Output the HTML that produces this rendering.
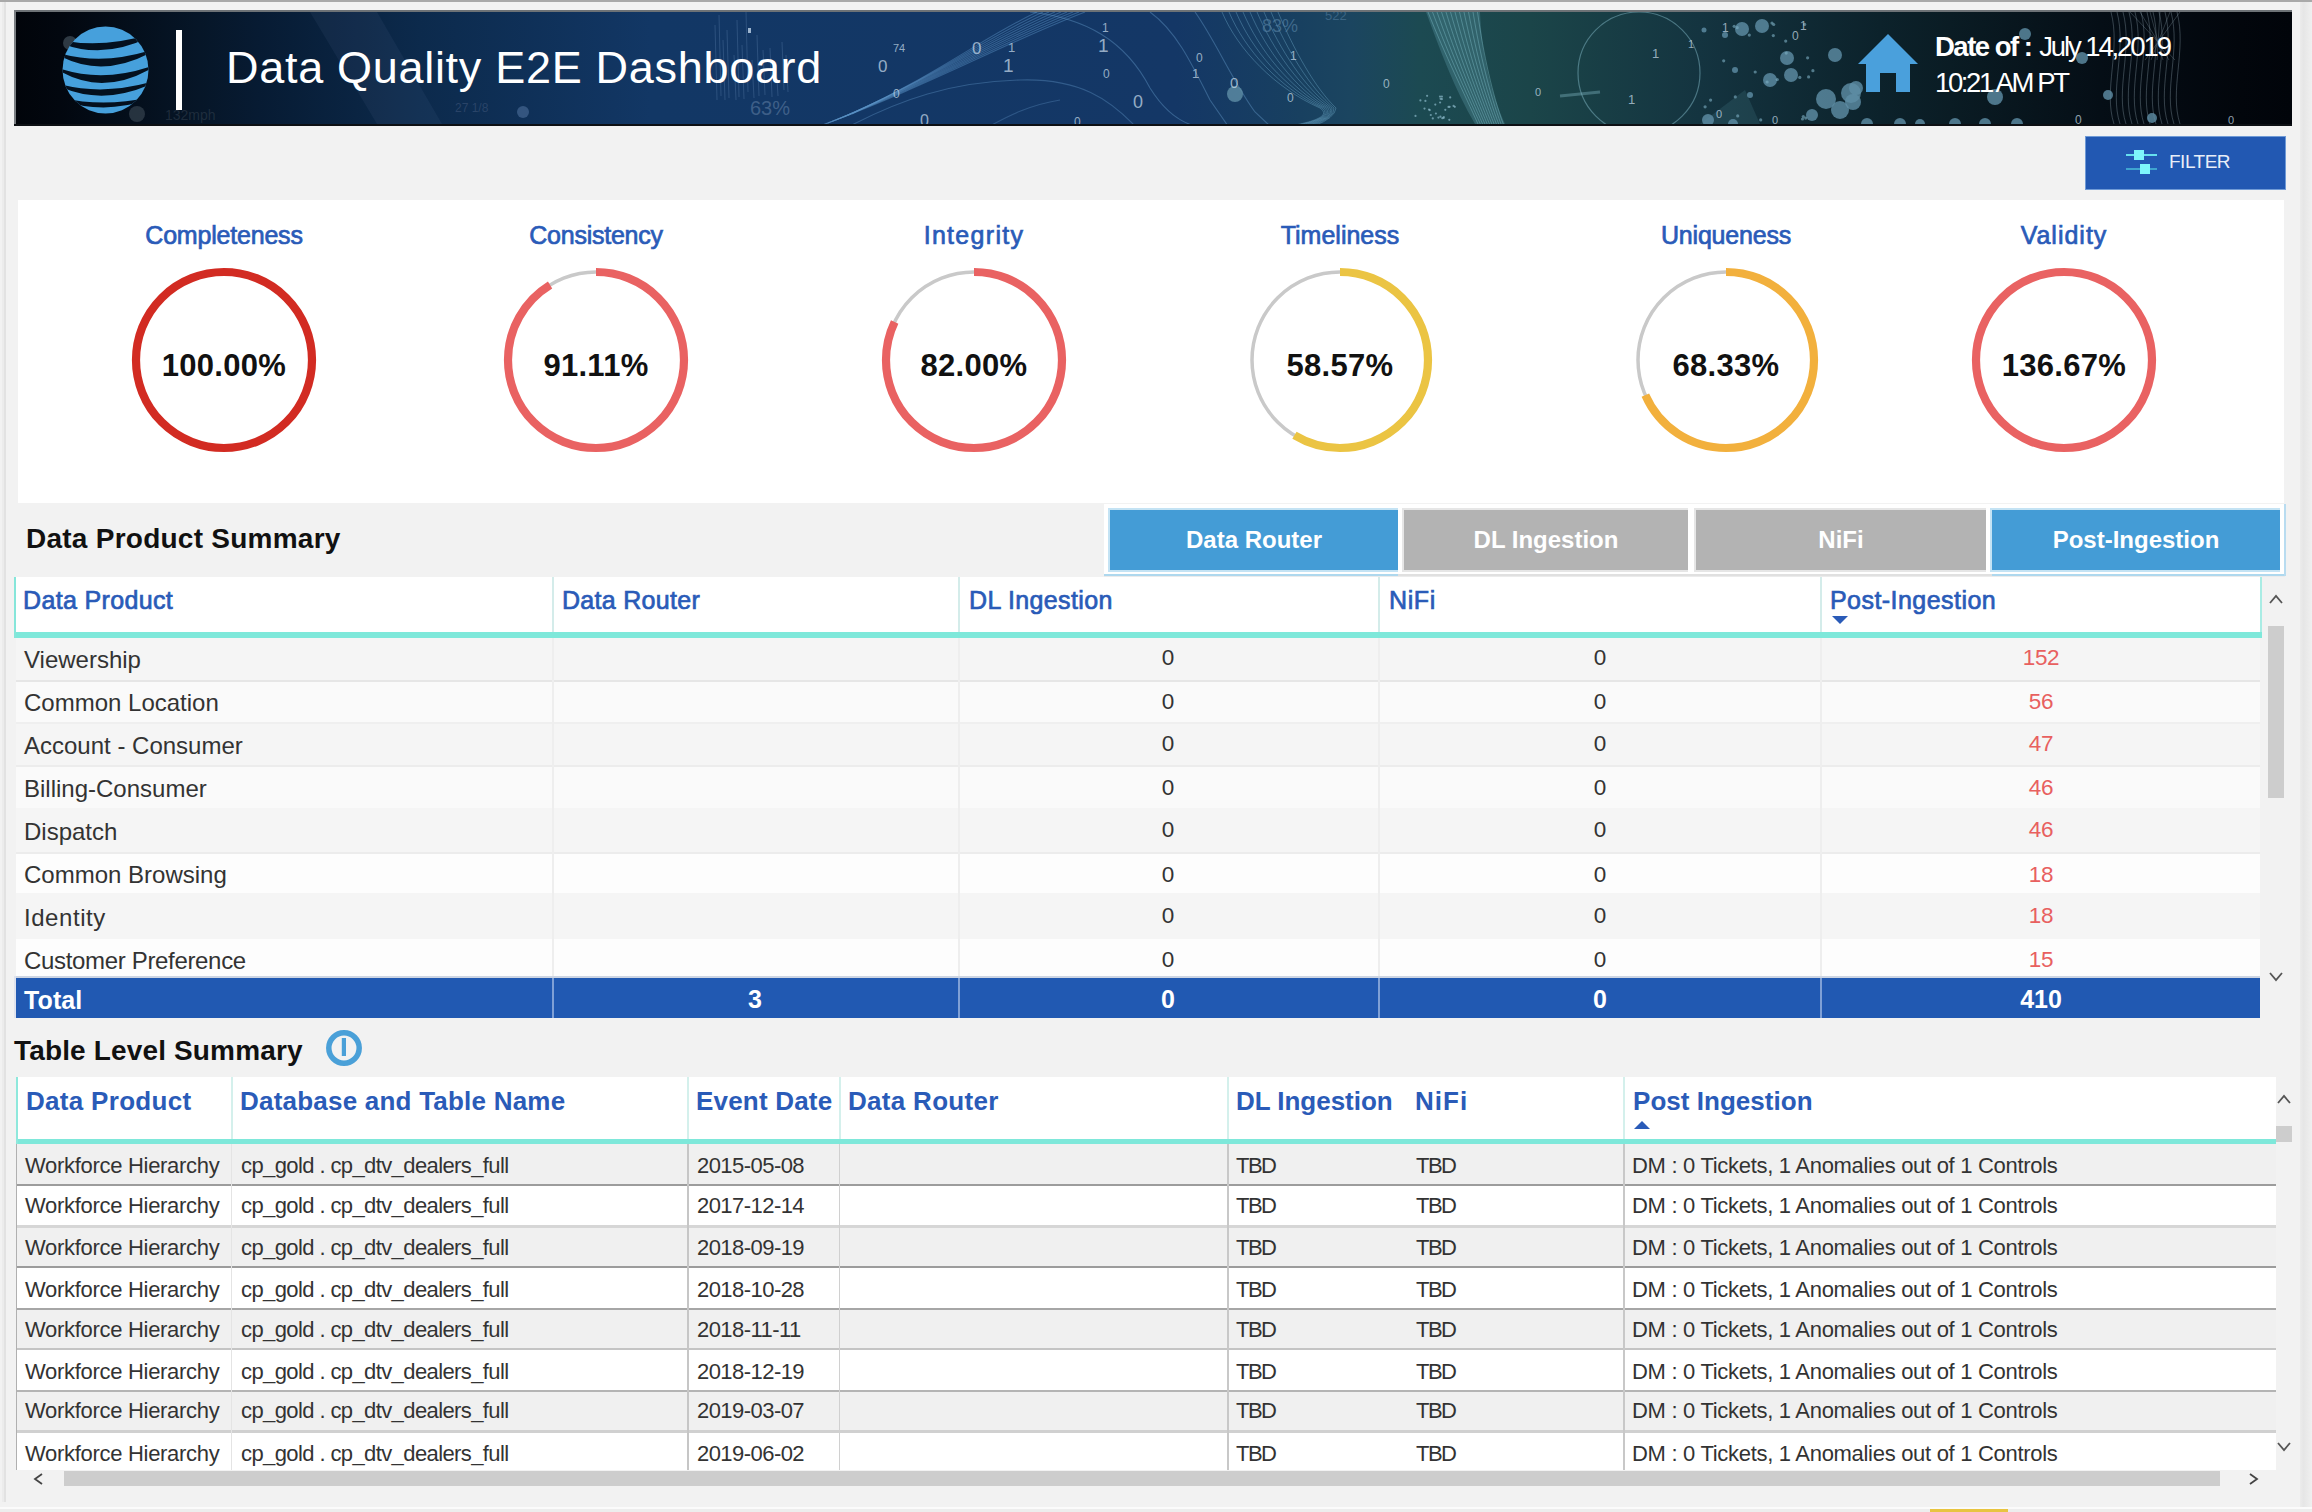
<!DOCTYPE html>
<html><head><meta charset="utf-8"><title>Data Quality E2E Dashboard</title>
<style>
html,body{margin:0;padding:0;}
body{width:2312px;height:1512px;overflow:hidden;background:#f2f2f2;position:relative;font-family:"Liberation Sans",sans-serif;}
.r{position:absolute;}
.t{position:absolute;white-space:nowrap;}
</style></head><body>
<div class="r" style="left:0px;top:0px;width:2312px;height:2px;background:#a9a9a9;"></div>
<div class="r" style="left:2px;top:2px;width:2px;height:1500px;background:#ececec;"></div>
<div class="r" style="left:4px;top:2px;width:2px;height:1500px;background:#e2e2e2;"></div>
<div class="r" style="left:2300px;top:2px;width:12px;height:1506px;background:linear-gradient(90deg,#ececec,#e6e6e6 30%,#f0f0f0);"></div>
<div class="r" style="left:0px;top:1507px;width:2312px;height:2px;background:#fbfbfb;"></div>
<div class="r" style="left:0px;top:1509px;width:2312px;height:3px;background:#ededed;"></div>
<div class="r" style="left:1930px;top:1509px;width:78px;height:3px;background:#e8c440;"></div>
<div class="r" style="left:14px;top:10px;width:2278px;height:116px;background:linear-gradient(90deg,#01040a 0.00%,#02070f 2.02%,#061628 8.17%,#071b33 10.80%,#0c2a4c 17.82%,#123765 27.92%,#143766 50.97%,#184060 56.45%,#1b4560 58.65%,#1c4a52 61.72%,#1b4549 66.55%,#143440 74.01%,#0c222b 81.91%,#0a1c24 84.99%,#050e16 91.57%,#02060c 97.72%,#01040a 100.00%);"></div>
<div class="r" style="left:14px;top:10px;width:2278px;height:2px;background:#6d7276;"></div>
<div class="r" style="left:14px;top:10px;width:2px;height:116px;background:#7a7e82;"></div>
<div class="r" style="left:14px;top:124px;width:2278px;height:2px;background:#0d1014;"></div>
<svg class="r" style="left:0;top:0" width="2312" height="140"><defs><clipPath id="bc"><rect x="16" y="12" width="2276" height="112"/></clipPath></defs><g clip-path="url(#bc)"><path d="M310,12 L377,12 L442,124 L377,124 Z" fill="#6a8ab0" fill-opacity="0.09"/><path d="M715,25 L717,100" stroke="#6f95c0" stroke-opacity="0.28" stroke-width="1" fill="none"/><path d="M719,15 L721,96" stroke="#6f95c0" stroke-opacity="0.28" stroke-width="1" fill="none"/><path d="M723,40 L725,100" stroke="#6f95c0" stroke-opacity="0.28" stroke-width="1" fill="none"/><path d="M727,30 L729,98" stroke="#6f95c0" stroke-opacity="0.28" stroke-width="1" fill="none"/><path d="M734,55 L736,100" stroke="#6f95c0" stroke-opacity="0.28" stroke-width="1" fill="none"/><path d="M737,20 L739,97" stroke="#6f95c0" stroke-opacity="0.28" stroke-width="1" fill="none"/><path d="M742,45 L744,99" stroke="#6f95c0" stroke-opacity="0.28" stroke-width="1" fill="none"/><path d="M746,12 L748,92" stroke="#6f95c0" stroke-opacity="0.28" stroke-width="1" fill="none"/><path d="M752,60 L754,98" stroke="#6f95c0" stroke-opacity="0.28" stroke-width="1" fill="none"/><path d="M757,35 L759,96" stroke="#6f95c0" stroke-opacity="0.28" stroke-width="1" fill="none"/><path d="M763,50 L765,95" stroke="#6f95c0" stroke-opacity="0.28" stroke-width="1" fill="none"/><path d="M770,48 L772,97" stroke="#6f95c0" stroke-opacity="0.28" stroke-width="1" fill="none"/><path d="M776,62 L778,96" stroke="#6f95c0" stroke-opacity="0.28" stroke-width="1" fill="none"/><path d="M782,42 L784,90" stroke="#6f95c0" stroke-opacity="0.28" stroke-width="1" fill="none"/><path d="M786,55 L788,92" stroke="#6f95c0" stroke-opacity="0.28" stroke-width="1" fill="none"/><rect x="748" y="28" width="3" height="5" fill="#c0d4ea" fill-opacity="0.8"/><path d="M820,126.0 C930,85 1000,45 1085,12" stroke="#5b93c6" stroke-opacity="0.45" stroke-width="1.1" fill="none"/><path d="M824,124.5 C932,83 998,44 1079,12" stroke="#5b93c6" stroke-opacity="0.45" stroke-width="1.1" fill="none"/><path d="M828,123.0 C934,81 996,43 1073,12" stroke="#5b93c6" stroke-opacity="0.45" stroke-width="1.1" fill="none"/><path d="M832,121.5 C936,79 994,42 1067,12" stroke="#5b93c6" stroke-opacity="0.45" stroke-width="1.1" fill="none"/><path d="M836,120.0 C938,77 992,41 1061,12" stroke="#5b93c6" stroke-opacity="0.45" stroke-width="1.1" fill="none"/><path d="M840,118.5 C940,75 990,40 1055,12" stroke="#5b93c6" stroke-opacity="0.45" stroke-width="1.1" fill="none"/><path d="M844,117.0 C942,73 988,39 1049,12" stroke="#5b93c6" stroke-opacity="0.45" stroke-width="1.1" fill="none"/><path d="M848,115.5 C944,71 986,38 1043,12" stroke="#5b93c6" stroke-opacity="0.45" stroke-width="1.1" fill="none"/><path d="M852,114.0 C946,69 984,37 1037,12" stroke="#5b93c6" stroke-opacity="0.45" stroke-width="1.1" fill="none"/><path d="M1030,12 C1085,18 1125,40 1150,88 C1165,112 1180,122 1195,126" stroke="#6aa0d0" stroke-opacity="0.4" stroke-width="1.1" fill="none"/><path d="M850,126 C900,100 950,82 1020,80 C1080,78 1110,100 1135,126" stroke="#6aa0d0" stroke-opacity="0.35" stroke-width="1.1" fill="none"/><path d="M990,126 C1010,115 1030,105 1060,100" stroke="#6aa0d0" stroke-opacity="0.3" stroke-width="1.1" fill="none"/><path d="M1150,12 C1175,30 1190,60 1210,100 L1228,126" stroke="#6aa0d0" stroke-opacity="0.4" stroke-width="1.1" fill="none"/><path d="M1195,12 C1215,40 1232,80 1255,112 L1270,126" stroke="#6aa0d0" stroke-opacity="0.4" stroke-width="1.1" fill="none"/><path d="M1222,12 C1238,50 1275,88 1320,108 Q1335,118 1290,126" stroke="#74b0d0" stroke-opacity="0.38" stroke-width="1" fill="none"/><path d="M1229,12 C1245,50 1280,88 1322,108 Q1335,118 1293,126" stroke="#74b0d0" stroke-opacity="0.38" stroke-width="1" fill="none"/><path d="M1236,12 C1252,50 1285,88 1324,108 Q1335,118 1296,126" stroke="#74b0d0" stroke-opacity="0.38" stroke-width="1" fill="none"/><path d="M1243,12 C1259,50 1290,88 1326,108 Q1335,118 1299,126" stroke="#74b0d0" stroke-opacity="0.38" stroke-width="1" fill="none"/><path d="M1250,12 C1266,50 1295,88 1328,108 Q1335,118 1302,126" stroke="#74b0d0" stroke-opacity="0.38" stroke-width="1" fill="none"/><path d="M1257,12 C1273,50 1300,88 1330,108 Q1335,118 1305,126" stroke="#74b0d0" stroke-opacity="0.38" stroke-width="1" fill="none"/><path d="M1264,12 C1280,50 1305,88 1332,108 Q1335,118 1308,126" stroke="#74b0d0" stroke-opacity="0.38" stroke-width="1" fill="none"/><path d="M1271,12 C1287,50 1310,88 1334,108 Q1335,118 1311,126" stroke="#74b0d0" stroke-opacity="0.38" stroke-width="1" fill="none"/><path d="M1278,12 C1294,50 1315,88 1336,108 Q1335,118 1314,126" stroke="#74b0d0" stroke-opacity="0.38" stroke-width="1" fill="none"/><path d="M1426,12 L1480,12 C1482,60 1492,95 1505,124 L1475,124 C1455,90 1440,50 1426,12 Z" fill="#7fc4d4" fill-opacity="0.22"/><path d="M1428.0,12 C1445.0,55 1465.0,95 1478.0,124" stroke="#8fd0dc" stroke-opacity="0.35" stroke-width="1" fill="none"/><path d="M1432.5,12 C1448.5,55 1467.5,95 1480.3,124" stroke="#8fd0dc" stroke-opacity="0.35" stroke-width="1" fill="none"/><path d="M1437.0,12 C1452.0,55 1470.0,95 1482.6,124" stroke="#8fd0dc" stroke-opacity="0.35" stroke-width="1" fill="none"/><path d="M1441.5,12 C1455.5,55 1472.5,95 1484.9,124" stroke="#8fd0dc" stroke-opacity="0.35" stroke-width="1" fill="none"/><path d="M1446.0,12 C1459.0,55 1475.0,95 1487.2,124" stroke="#8fd0dc" stroke-opacity="0.35" stroke-width="1" fill="none"/><path d="M1450.5,12 C1462.5,55 1477.5,95 1489.5,124" stroke="#8fd0dc" stroke-opacity="0.35" stroke-width="1" fill="none"/><path d="M1455.0,12 C1466.0,55 1480.0,95 1491.8,124" stroke="#8fd0dc" stroke-opacity="0.35" stroke-width="1" fill="none"/><path d="M1459.5,12 C1469.5,55 1482.5,95 1494.1,124" stroke="#8fd0dc" stroke-opacity="0.35" stroke-width="1" fill="none"/><path d="M1464.0,12 C1473.0,55 1485.0,95 1496.4,124" stroke="#8fd0dc" stroke-opacity="0.35" stroke-width="1" fill="none"/><path d="M1468.5,12 C1476.5,55 1487.5,95 1498.7,124" stroke="#8fd0dc" stroke-opacity="0.35" stroke-width="1" fill="none"/><path d="M1473.0,12 C1480.0,55 1490.0,95 1501.0,124" stroke="#8fd0dc" stroke-opacity="0.35" stroke-width="1" fill="none"/><path d="M1477.5,12 C1483.5,55 1492.5,95 1503.3,124" stroke="#8fd0dc" stroke-opacity="0.35" stroke-width="1" fill="none"/><path d="M1700,124 L1745,90 L1760,124 Z" fill="#7fc4d4" fill-opacity="0.12"/><path d="M2111,12 C2121,50 2103,90 2114,124" stroke="#a8c0cc" stroke-opacity="0.3" stroke-width="1" fill="none"/><path d="M2117,12 C2127,50 2109,90 2120,124" stroke="#a8c0cc" stroke-opacity="0.3" stroke-width="1" fill="none"/><path d="M2123,12 C2133,50 2115,90 2126,124" stroke="#a8c0cc" stroke-opacity="0.3" stroke-width="1" fill="none"/><path d="M2129,12 C2139,50 2121,90 2132,124" stroke="#a8c0cc" stroke-opacity="0.3" stroke-width="1" fill="none"/><path d="M2135,12 C2145,50 2127,90 2138,124" stroke="#a8c0cc" stroke-opacity="0.3" stroke-width="1" fill="none"/><path d="M2141,12 C2151,50 2133,90 2144,124" stroke="#a8c0cc" stroke-opacity="0.3" stroke-width="1" fill="none"/><path d="M2147,12 C2157,50 2139,90 2150,124" stroke="#a8c0cc" stroke-opacity="0.3" stroke-width="1" fill="none"/><path d="M2153,12 C2163,50 2145,90 2156,124" stroke="#a8c0cc" stroke-opacity="0.3" stroke-width="1" fill="none"/><path d="M2159,12 C2169,50 2151,90 2162,124" stroke="#a8c0cc" stroke-opacity="0.3" stroke-width="1" fill="none"/><path d="M2165,12 C2175,50 2157,90 2168,124" stroke="#a8c0cc" stroke-opacity="0.3" stroke-width="1" fill="none"/><path d="M2171,12 C2181,50 2163,90 2174,124" stroke="#a8c0cc" stroke-opacity="0.3" stroke-width="1" fill="none"/><path d="M2177,12 C2187,50 2169,90 2180,124" stroke="#a8c0cc" stroke-opacity="0.3" stroke-width="1" fill="none"/><path d="M2130,12 L2175,60" stroke="#a8c0cc" stroke-opacity="0.25" stroke-width="1" fill="none"/><path d="M2140,12 L2169,60" stroke="#a8c0cc" stroke-opacity="0.25" stroke-width="1" fill="none"/><path d="M2150,12 L2163,60" stroke="#a8c0cc" stroke-opacity="0.25" stroke-width="1" fill="none"/><path d="M2160,12 L2157,60" stroke="#a8c0cc" stroke-opacity="0.25" stroke-width="1" fill="none"/><path d="M2170,12 L2151,60" stroke="#a8c0cc" stroke-opacity="0.25" stroke-width="1" fill="none"/><path d="M2180,12 L2145,60" stroke="#a8c0cc" stroke-opacity="0.25" stroke-width="1" fill="none"/><circle cx="1639" cy="73" r="61" stroke="#7fb6c4" stroke-opacity="0.5" stroke-width="1.2" fill="none"/><path d="M1560,96 L1600,92" stroke="#7fb6c4" stroke-opacity="0.4" stroke-width="3" fill="none"/><circle cx="1742" cy="29" r="7" fill="#5f8ea6" fill-opacity="0.8"/><circle cx="1762" cy="26" r="7" fill="#5f8ea6" fill-opacity="0.8"/><circle cx="1787" cy="58" r="7" fill="#5f8ea6" fill-opacity="0.8"/><circle cx="1835" cy="55" r="7" fill="#5f8ea6" fill-opacity="0.8"/><circle cx="1770" cy="80" r="7" fill="#5f8ea6" fill-opacity="0.8"/><circle cx="1791" cy="75" r="7" fill="#5f8ea6" fill-opacity="0.8"/><circle cx="1826" cy="99" r="10" fill="#5f8ea6" fill-opacity="0.8"/><circle cx="1851" cy="93" r="10" fill="#5f8ea6" fill-opacity="0.8"/><circle cx="1840" cy="110" r="9" fill="#5f8ea6" fill-opacity="0.8"/><circle cx="1812" cy="115" r="6" fill="#5f8ea6" fill-opacity="0.8"/><circle cx="1735" cy="70" r="3" fill="#5f8ea6" fill-opacity="0.8"/><circle cx="1750" cy="95" r="3" fill="#5f8ea6" fill-opacity="0.8"/><circle cx="1725" cy="35" r="3" fill="#5f8ea6" fill-opacity="0.8"/><circle cx="1704" cy="30" r="2.5" fill="#5f8ea6" fill-opacity="0.8"/><circle cx="1708" cy="120" r="6" fill="#5f8ea6" fill-opacity="0.8"/><circle cx="1733" cy="124" r="5" fill="#5f8ea6" fill-opacity="0.8"/><circle cx="1235" cy="94" r="8" fill="#5f8ea6" fill-opacity="0.8"/><circle cx="1867" cy="124" r="6" fill="#5f8ea6" fill-opacity="0.8"/><circle cx="1900" cy="124" r="6" fill="#5f8ea6" fill-opacity="0.8"/><circle cx="1920" cy="124" r="5" fill="#5f8ea6" fill-opacity="0.8"/><circle cx="1955" cy="124" r="6" fill="#5f8ea6" fill-opacity="0.8"/><circle cx="1985" cy="124" r="6" fill="#5f8ea6" fill-opacity="0.8"/><circle cx="2017" cy="124" r="6" fill="#5f8ea6" fill-opacity="0.8"/><circle cx="1995" cy="97" r="8" fill="#5f8ea6" fill-opacity="0.8"/><circle cx="2108" cy="95" r="5" fill="#5f8ea6" fill-opacity="0.8"/><circle cx="2152" cy="118" r="5" fill="#5f8ea6" fill-opacity="0.8"/><circle cx="2025" cy="34" r="6" fill="#5f8ea6" fill-opacity="0.8"/><circle cx="2082" cy="58" r="6" fill="#5f8ea6" fill-opacity="0.8"/><circle cx="1856" cy="88" r="7" fill="#5f8ea6" fill-opacity="0.8"/><circle cx="1853" cy="102" r="8" fill="#5f8ea6" fill-opacity="0.8"/><circle cx="1424.5" cy="108.6" r="1.1" fill="#8ab8c8" fill-opacity="0.7"/><circle cx="1429.8" cy="110.1" r="1.1" fill="#8ab8c8" fill-opacity="0.7"/><circle cx="1440.0" cy="96.6" r="1.1" fill="#8ab8c8" fill-opacity="0.7"/><circle cx="1415.5" cy="115.9" r="1.1" fill="#8ab8c8" fill-opacity="0.7"/><circle cx="1425.4" cy="100.9" r="1.1" fill="#8ab8c8" fill-opacity="0.7"/><circle cx="1454.8" cy="106.8" r="1.1" fill="#8ab8c8" fill-opacity="0.7"/><circle cx="1448.5" cy="106.9" r="1.1" fill="#8ab8c8" fill-opacity="0.7"/><circle cx="1440.6" cy="98.8" r="1.1" fill="#8ab8c8" fill-opacity="0.7"/><circle cx="1440.4" cy="116.7" r="1.1" fill="#8ab8c8" fill-opacity="0.7"/><circle cx="1435.9" cy="113.5" r="1.1" fill="#8ab8c8" fill-opacity="0.7"/><circle cx="1441.9" cy="96.6" r="1.1" fill="#8ab8c8" fill-opacity="0.7"/><circle cx="1445.3" cy="109.8" r="1.1" fill="#8ab8c8" fill-opacity="0.7"/><circle cx="1427.1" cy="95.8" r="1.1" fill="#8ab8c8" fill-opacity="0.7"/><circle cx="1449.6" cy="106.8" r="1.1" fill="#8ab8c8" fill-opacity="0.7"/><circle cx="1443.8" cy="117.0" r="1.1" fill="#8ab8c8" fill-opacity="0.7"/><circle cx="1443.6" cy="118.0" r="1.1" fill="#8ab8c8" fill-opacity="0.7"/><circle cx="1430.8" cy="115.0" r="1.1" fill="#8ab8c8" fill-opacity="0.7"/><circle cx="1432.8" cy="118.4" r="1.1" fill="#8ab8c8" fill-opacity="0.7"/><circle cx="1450.2" cy="97.4" r="1.1" fill="#8ab8c8" fill-opacity="0.7"/><circle cx="1420.4" cy="100.4" r="1.1" fill="#8ab8c8" fill-opacity="0.7"/><circle cx="1453.6" cy="105.9" r="1.1" fill="#8ab8c8" fill-opacity="0.7"/><circle cx="1440.1" cy="102.5" r="1.1" fill="#8ab8c8" fill-opacity="0.7"/><circle cx="1435.3" cy="104.6" r="1.1" fill="#8ab8c8" fill-opacity="0.7"/><circle cx="1429.0" cy="109.6" r="1.1" fill="#8ab8c8" fill-opacity="0.7"/><circle cx="1438.4" cy="117.6" r="1.1" fill="#8ab8c8" fill-opacity="0.7"/><circle cx="1442.3" cy="118.2" r="1.1" fill="#8ab8c8" fill-opacity="0.7"/><circle cx="1449.3" cy="119.8" r="1.1" fill="#8ab8c8" fill-opacity="0.7"/><circle cx="1441.9" cy="99.1" r="1.1" fill="#8ab8c8" fill-opacity="0.7"/><circle cx="1803.3" cy="116.5" r="1.6" fill="#7fb0c4" fill-opacity="0.6"/><circle cx="1808.6" cy="76.9" r="1.6" fill="#7fb0c4" fill-opacity="0.6"/><circle cx="1785.7" cy="41.1" r="1.6" fill="#7fb0c4" fill-opacity="0.6"/><circle cx="1799.8" cy="77.4" r="1.6" fill="#7fb0c4" fill-opacity="0.6"/><circle cx="1734.2" cy="26.3" r="1.6" fill="#7fb0c4" fill-opacity="0.6"/><circle cx="1802.5" cy="119.0" r="1.6" fill="#7fb0c4" fill-opacity="0.6"/><circle cx="1710.6" cy="100.1" r="1.6" fill="#7fb0c4" fill-opacity="0.6"/><circle cx="1749.3" cy="35.1" r="1.6" fill="#7fb0c4" fill-opacity="0.6"/><circle cx="1735.3" cy="96.9" r="1.6" fill="#7fb0c4" fill-opacity="0.6"/><circle cx="1804.7" cy="24.4" r="1.6" fill="#7fb0c4" fill-opacity="0.6"/><circle cx="1773.7" cy="24.5" r="1.6" fill="#7fb0c4" fill-opacity="0.6"/><circle cx="1786.2" cy="53.1" r="1.6" fill="#7fb0c4" fill-opacity="0.6"/><circle cx="1805.7" cy="118.1" r="1.6" fill="#7fb0c4" fill-opacity="0.6"/><circle cx="1760.7" cy="119.9" r="1.6" fill="#7fb0c4" fill-opacity="0.6"/><circle cx="1737.2" cy="27.7" r="1.6" fill="#7fb0c4" fill-opacity="0.6"/><circle cx="1772.0" cy="23.1" r="1.6" fill="#7fb0c4" fill-opacity="0.6"/><circle cx="1723.7" cy="60.8" r="1.6" fill="#7fb0c4" fill-opacity="0.6"/><circle cx="1773.3" cy="35.6" r="1.6" fill="#7fb0c4" fill-opacity="0.6"/><circle cx="1705.1" cy="106.8" r="1.6" fill="#7fb0c4" fill-opacity="0.6"/><circle cx="1737.7" cy="115.9" r="1.6" fill="#7fb0c4" fill-opacity="0.6"/><circle cx="1807.6" cy="57.8" r="1.6" fill="#7fb0c4" fill-opacity="0.6"/><circle cx="1755.2" cy="72.0" r="1.6" fill="#7fb0c4" fill-opacity="0.6"/><circle cx="1777.3" cy="79.6" r="1.6" fill="#7fb0c4" fill-opacity="0.6"/><circle cx="1767.1" cy="82.0" r="1.6" fill="#7fb0c4" fill-opacity="0.6"/><circle cx="1812.9" cy="70.7" r="1.6" fill="#7fb0c4" fill-opacity="0.6"/><circle cx="70" cy="43" r="7" fill="#3a4650" fill-opacity="0.8"/><circle cx="137" cy="114" r="8" fill="#2f3c48" fill-opacity="0.8"/><circle cx="523" cy="112" r="6" fill="#3d5f8a" fill-opacity="0.8"/><text x="878" y="72" font-size="17" fill="#cfe0f0" fill-opacity="0.7" font-family="Liberation Sans">0</text><text x="893" y="52" font-size="11" fill="#cfe0f0" fill-opacity="0.7" font-family="Liberation Sans">74</text><text x="972" y="54" font-size="17" fill="#cfe0f0" fill-opacity="0.7" font-family="Liberation Sans">0</text><text x="1008" y="52" font-size="13" fill="#cfe0f0" fill-opacity="0.7" font-family="Liberation Sans">1</text><text x="1003" y="72" font-size="19" fill="#cfe0f0" fill-opacity="0.7" font-family="Liberation Sans">1</text><text x="1102" y="32" font-size="12" fill="#cfe0f0" fill-opacity="0.7" font-family="Liberation Sans">1</text><text x="1098" y="52" font-size="19" fill="#cfe0f0" fill-opacity="0.7" font-family="Liberation Sans">1</text><text x="1103" y="78" font-size="12" fill="#cfe0f0" fill-opacity="0.7" font-family="Liberation Sans">0</text><text x="1133" y="108" font-size="18" fill="#cfe0f0" fill-opacity="0.7" font-family="Liberation Sans">0</text><text x="1196" y="62" font-size="12" fill="#cfe0f0" fill-opacity="0.7" font-family="Liberation Sans">0</text><text x="1192" y="78" font-size="13" fill="#cfe0f0" fill-opacity="0.7" font-family="Liberation Sans">1</text><text x="1230" y="88" font-size="15" fill="#cfe0f0" fill-opacity="0.7" font-family="Liberation Sans">0</text><text x="1287" y="102" font-size="12" fill="#cfe0f0" fill-opacity="0.7" font-family="Liberation Sans">0</text><text x="1290" y="60" font-size="12" fill="#cfe0f0" fill-opacity="0.7" font-family="Liberation Sans">1</text><text x="1383" y="88" font-size="12" fill="#cfe0f0" fill-opacity="0.7" font-family="Liberation Sans">0</text><text x="893" y="98" font-size="12" fill="#cfe0f0" fill-opacity="0.7" font-family="Liberation Sans">0</text><text x="920" y="126" font-size="16" fill="#cfe0f0" fill-opacity="0.7" font-family="Liberation Sans">0</text><text x="1074" y="126" font-size="12" fill="#cfe0f0" fill-opacity="0.7" font-family="Liberation Sans">0</text><text x="1535" y="96" font-size="11" fill="#cfe0f0" fill-opacity="0.7" font-family="Liberation Sans">0</text><text x="1652" y="58" font-size="13" fill="#cfe0f0" fill-opacity="0.7" font-family="Liberation Sans">1</text><text x="1628" y="104" font-size="13" fill="#cfe0f0" fill-opacity="0.7" font-family="Liberation Sans">1</text><text x="1688" y="48" font-size="11" fill="#cfe0f0" fill-opacity="0.7" font-family="Liberation Sans">1</text><text x="1716" y="118" font-size="11" fill="#cfe0f0" fill-opacity="0.7" font-family="Liberation Sans">0</text><text x="1722" y="32" font-size="12" fill="#cfe0f0" fill-opacity="0.7" font-family="Liberation Sans">1</text><text x="1800" y="30" font-size="12" fill="#cfe0f0" fill-opacity="0.7" font-family="Liberation Sans">1</text><text x="1792" y="40" font-size="12" fill="#cfe0f0" fill-opacity="0.7" font-family="Liberation Sans">0</text><text x="2075" y="124" font-size="12" fill="#cfe0f0" fill-opacity="0.7" font-family="Liberation Sans">0</text><text x="2228" y="124" font-size="11" fill="#cfe0f0" fill-opacity="0.7" font-family="Liberation Sans">0</text><text x="1772" y="124" font-size="11" fill="#cfe0f0" fill-opacity="0.7" font-family="Liberation Sans">0</text><text x="750" y="115" font-size="20" fill="#4a6a92" fill-opacity="0.8" font-family="Liberation Sans">63%</text><text x="1262" y="32" font-size="18" fill="#5a86a8" fill-opacity="0.6" font-family="Liberation Sans">83%</text><text x="1325" y="20" font-size="13" fill="#5a86a8" fill-opacity="0.5" font-family="Liberation Sans">522</text><text x="165" y="120" font-size="14" fill="#3d4a58" fill-opacity="0.45" font-family="Liberation Sans">132mph</text><text x="455" y="112" font-size="12" fill="#3d5478" fill-opacity="0.6" font-family="Liberation Sans">27   1/8</text></g></svg>
<svg class="r" style="left:0;top:0" width="220" height="140"><defs><clipPath id="gclip"><ellipse cx="105.5" cy="70" rx="43" ry="43.5"/></clipPath></defs><g clip-path="url(#gclip)"><rect x="55" y="20" width="100" height="100" fill="#46a0dc"/><path d="M56,39.2 Q102,49.5 154,33.2 L154,34.8 Q102,62.5 56,40.8 Z" fill="#04101e"/><path d="M56,52.2 Q102,66.5 154,49.2 L154,50.8 Q102,80.5 56,53.8 Z" fill="#04101e"/><path d="M56,67.2 Q102,84.0 154,65.2 L154,66.8 Q102,98.0 56,68.8 Z" fill="#04101e"/><path d="M56,83.2 Q102,96.5 154,81.2 L154,82.8 Q102,107.5 56,84.8 Z" fill="#04101e"/><path d="M56,96.2 Q102,109.0 154,96.2 L154,97.8 Q102,117.0 56,97.8 Z" fill="#04101e"/></g></svg>
<div class="r" style="left:176px;top:30px;width:6px;height:80px;background:#ffffff;"></div>
<div class="t " style="left:226px;top:45.41px;font-size:45px;line-height:45px;font-weight:400;color:#ffffff;letter-spacing:0.7px;">Data Quality E2E Dashboard</div>
<svg class="r" style="left:1850px;top:28px" width="80" height="70"><path d="M38,6 L68,36 L60,36 L60,64 L46,64 L46,45 L30,45 L30,64 L16,64 L16,36 L8,36 Z" fill="#4aa0dc"/></svg>
<div class="t " style="left:1935px;top:33.02px;font-size:27.5px;line-height:27.5px;font-weight:400;color:#ffffff;"><b style="letter-spacing:-1.5px">Date of :</b> <span style="letter-spacing:-2.1px">July 14,2019</span></div>
<div class="t " style="left:1935px;top:68.72px;font-size:27.5px;line-height:27.5px;font-weight:400;color:#ffffff;letter-spacing:-2.4px;">10:21 AM PT</div>
<div class="r" style="left:2085px;top:136px;width:201px;height:54px;background:#2258b2;box-shadow:inset 0 0 0 1px #6f9ad6;"></div>
<svg class="r" style="left:2120px;top:145px" width="45" height="35"><rect x="6" y="9" width="31" height="2" fill="#66e0ee"/><rect x="14" y="5" width="10" height="10" fill="#7ef6fb"/><rect x="6" y="23" width="31" height="2" fill="#3fa4d0"/><rect x="20" y="19" width="10" height="10" fill="#7ef6fb"/></svg>
<div class="t " style="left:2169px;top:151.92px;font-size:19px;line-height:19px;font-weight:400;color:#e8eef8;letter-spacing:-0.5px;">FILTER</div>
<div class="r" style="left:18px;top:200px;width:2266px;height:303px;background:#ffffff;"></div>
<svg class="r" style="left:0;top:0" width="2312" height="520"><circle cx="224" cy="360" r="88.0" fill="none" stroke="#c9c9c9" stroke-width="3.5"/><circle cx="224" cy="360" r="88.0" fill="none" stroke="#d22b22" stroke-width="8.2"/><circle cx="596" cy="360" r="88.0" fill="none" stroke="#c9c9c9" stroke-width="3.5"/><circle cx="596" cy="360" r="88.0" fill="none" stroke="#e96262" stroke-width="8.2" stroke-dasharray="503.77 552.92" transform="rotate(-90 596 360)"/><circle cx="974" cy="360" r="88.0" fill="none" stroke="#c9c9c9" stroke-width="3.5"/><circle cx="974" cy="360" r="88.0" fill="none" stroke="#e96262" stroke-width="8.2" stroke-dasharray="453.39 552.92" transform="rotate(-90 974 360)"/><circle cx="1340" cy="360" r="88.0" fill="none" stroke="#c9c9c9" stroke-width="3.5"/><circle cx="1340" cy="360" r="88.0" fill="none" stroke="#ebc443" stroke-width="8.2" stroke-dasharray="323.85 552.92" transform="rotate(-90 1340 360)"/><circle cx="1726" cy="360" r="88.0" fill="none" stroke="#c9c9c9" stroke-width="3.5"/><circle cx="1726" cy="360" r="88.0" fill="none" stroke="#f2b03d" stroke-width="8.2" stroke-dasharray="377.81 552.92" transform="rotate(-90 1726 360)"/><circle cx="2064" cy="360" r="88.0" fill="none" stroke="#c9c9c9" stroke-width="3.5"/><circle cx="2064" cy="360" r="88.0" fill="none" stroke="#e96262" stroke-width="8.2"/></svg>
<div class="t" style="left:24.0px;width:400px;text-align:center;top:223.14px;font-size:25px;line-height:25px;font-weight:400;color:#2a5bb8;letter-spacing:-0.2px;-webkit-text-stroke:0.7px #2a5bb8;">Completeness</div>
<div class="t" style="left:24.0px;width:400px;text-align:center;top:349.76px;font-size:31px;line-height:31px;font-weight:700;color:#111111;letter-spacing:0.3px;">100.00%</div>
<div class="t" style="left:396.0px;width:400px;text-align:center;top:223.14px;font-size:25px;line-height:25px;font-weight:400;color:#2a5bb8;letter-spacing:-0.25px;-webkit-text-stroke:0.7px #2a5bb8;">Consistency</div>
<div class="t" style="left:396.0px;width:400px;text-align:center;top:349.76px;font-size:31px;line-height:31px;font-weight:700;color:#111111;letter-spacing:0.3px;">91.11%</div>
<div class="t" style="left:774.0px;width:400px;text-align:center;top:223.14px;font-size:25px;line-height:25px;font-weight:400;color:#2a5bb8;letter-spacing:1.3px;-webkit-text-stroke:0.7px #2a5bb8;">Integrity</div>
<div class="t" style="left:774.0px;width:400px;text-align:center;top:349.76px;font-size:31px;line-height:31px;font-weight:700;color:#111111;letter-spacing:0.3px;">82.00%</div>
<div class="t" style="left:1140.0px;width:400px;text-align:center;top:223.14px;font-size:25px;line-height:25px;font-weight:400;color:#2a5bb8;letter-spacing:0.0px;-webkit-text-stroke:0.7px #2a5bb8;">Timeliness</div>
<div class="t" style="left:1140.0px;width:400px;text-align:center;top:349.76px;font-size:31px;line-height:31px;font-weight:700;color:#111111;letter-spacing:0.3px;">58.57%</div>
<div class="t" style="left:1526.0px;width:400px;text-align:center;top:223.14px;font-size:25px;line-height:25px;font-weight:400;color:#2a5bb8;letter-spacing:-0.2px;-webkit-text-stroke:0.7px #2a5bb8;">Uniqueness</div>
<div class="t" style="left:1526.0px;width:400px;text-align:center;top:349.76px;font-size:31px;line-height:31px;font-weight:700;color:#111111;letter-spacing:0.3px;">68.33%</div>
<div class="t" style="left:1864.0px;width:400px;text-align:center;top:223.14px;font-size:25px;line-height:25px;font-weight:400;color:#2a5bb8;letter-spacing:1.0px;-webkit-text-stroke:0.7px #2a5bb8;">Validity</div>
<div class="t" style="left:1864.0px;width:400px;text-align:center;top:349.76px;font-size:31px;line-height:31px;font-weight:700;color:#111111;letter-spacing:0.3px;">136.67%</div>
<div class="t " style="left:26px;top:525.00px;font-size:28px;line-height:28px;font-weight:700;color:#111111;letter-spacing:0.25px;">Data Product Summary</div>
<div class="r" style="left:1104px;top:504px;width:1181px;height:72px;background:#ffffff;"></div>
<div class="r" style="left:1104px;top:574px;width:294px;height:2px;background:#aed8ee;"></div>
<div class="r" style="left:1398px;top:574px;width:594px;height:2px;background:#e0e0e0;"></div>
<div class="r" style="left:1992px;top:574px;width:293px;height:2px;background:#aed8ee;"></div>
<div class="r" style="left:2284px;top:504px;width:2px;height:72px;background:#b9dcf0;"></div>
<div class="r" style="left:1104px;top:576px;width:1181px;height:1px;background:#ebebeb;"></div>
<div class="r" style="left:1108px;top:508px;width:290px;height:64px;background:#c4e3f4;"></div>
<div class="r" style="left:1110px;top:510px;width:288px;height:60px;background:#449cd6;"></div>
<div class="t" style="left:1110.0px;width:288px;text-align:center;top:527.68px;font-size:24px;line-height:24px;font-weight:700;color:#ffffff;letter-spacing:0px;">Data Router</div>
<div class="r" style="left:1402px;top:508px;width:286px;height:64px;background:#e6e6e6;"></div>
<div class="r" style="left:1404px;top:510px;width:284px;height:60px;background:#b3b3b3;"></div>
<div class="t" style="left:1404.0px;width:284px;text-align:center;top:527.68px;font-size:24px;line-height:24px;font-weight:700;color:#ffffff;letter-spacing:0px;">DL Ingestion</div>
<div class="r" style="left:1694px;top:508px;width:292px;height:64px;background:#e6e6e6;"></div>
<div class="r" style="left:1696px;top:510px;width:290px;height:60px;background:#b3b3b3;"></div>
<div class="t" style="left:1696.0px;width:290px;text-align:center;top:527.68px;font-size:24px;line-height:24px;font-weight:700;color:#ffffff;letter-spacing:0px;">NiFi</div>
<div class="r" style="left:1990px;top:508px;width:290px;height:64px;background:#c4e3f4;"></div>
<div class="r" style="left:1992px;top:510px;width:288px;height:60px;background:#449cd6;"></div>
<div class="t" style="left:1992.0px;width:288px;text-align:center;top:527.68px;font-size:24px;line-height:24px;font-weight:700;color:#ffffff;letter-spacing:0px;">Post-Ingestion</div>
<div class="r" style="left:14px;top:577px;width:2248px;height:61px;background:#ffffff;"></div>
<div class="r" style="left:14px;top:577px;width:2px;height:61px;background:#86e6da;"></div>
<div class="r" style="left:2260px;top:577px;width:2px;height:61px;background:#a9ece4;"></div>
<div class="r" style="left:16px;top:632px;width:2246px;height:6px;background:#7ee8da;"></div>
<div class="r" style="left:552px;top:577px;width:2px;height:55px;background:#d4ecea;"></div>
<div class="r" style="left:958px;top:577px;width:2px;height:55px;background:#d4ecea;"></div>
<div class="r" style="left:1378px;top:577px;width:2px;height:55px;background:#d4ecea;"></div>
<div class="r" style="left:1820px;top:577px;width:2px;height:55px;background:#d4ecea;"></div>
<div class="t " style="left:23px;top:587.84px;font-size:25px;line-height:25px;font-weight:400;color:#2a5bb8;letter-spacing:0.35px;-webkit-text-stroke:0.7px #2a5bb8;">Data Product</div>
<div class="t " style="left:562px;top:587.84px;font-size:25px;line-height:25px;font-weight:400;color:#2a5bb8;letter-spacing:0.3px;-webkit-text-stroke:0.7px #2a5bb8;">Data Router</div>
<div class="t " style="left:969px;top:587.84px;font-size:25px;line-height:25px;font-weight:400;color:#2a5bb8;letter-spacing:0.35px;-webkit-text-stroke:0.7px #2a5bb8;">DL Ingestion</div>
<div class="t " style="left:1389px;top:587.84px;font-size:25px;line-height:25px;font-weight:400;color:#2a5bb8;letter-spacing:0.6px;-webkit-text-stroke:0.7px #2a5bb8;">NiFi</div>
<div class="t " style="left:1830px;top:587.84px;font-size:25px;line-height:25px;font-weight:400;color:#2a5bb8;letter-spacing:0.45px;-webkit-text-stroke:0.7px #2a5bb8;">Post-Ingestion</div>
<svg class="r" style="left:1830px;top:614px" width="22" height="12"><path d="M2,2 L18,2 L10,10 Z" fill="#2a5bb8"/></svg>
<div class="r" style="left:16px;top:638px;width:2244px;height:42px;background:#f5f5f5;"></div>
<div class="r" style="left:16px;top:680px;width:2244px;height:2px;background:#e6e6e6;"></div>
<div class="t " style="left:24px;top:647.68px;font-size:24px;line-height:24px;font-weight:400;color:#333333;letter-spacing:0px;">Viewership</div>
<div class="t" style="left:1118.0px;width:100px;text-align:center;top:647.05px;font-size:22.5px;line-height:22.5px;font-weight:400;color:#333333;">0</div>
<div class="t" style="left:1550.0px;width:100px;text-align:center;top:647.05px;font-size:22.5px;line-height:22.5px;font-weight:400;color:#333333;">0</div>
<div class="t" style="left:1991.0px;width:100px;text-align:center;top:647.05px;font-size:22.5px;line-height:22.5px;font-weight:400;color:#e8605f;letter-spacing:-0.3px;">152</div>
<div class="r" style="left:16px;top:682px;width:2244px;height:40px;background:#fafafa;"></div>
<div class="r" style="left:16px;top:722px;width:2244px;height:2px;background:#efefef;"></div>
<div class="t " style="left:24px;top:690.98px;font-size:24px;line-height:24px;font-weight:400;color:#333333;letter-spacing:0px;">Common Location</div>
<div class="t" style="left:1118.0px;width:100px;text-align:center;top:691.05px;font-size:22.5px;line-height:22.5px;font-weight:400;color:#333333;">0</div>
<div class="t" style="left:1550.0px;width:100px;text-align:center;top:691.05px;font-size:22.5px;line-height:22.5px;font-weight:400;color:#333333;">0</div>
<div class="t" style="left:1991.0px;width:100px;text-align:center;top:691.05px;font-size:22.5px;line-height:22.5px;font-weight:400;color:#e8605f;letter-spacing:-0.3px;">56</div>
<div class="r" style="left:16px;top:724px;width:2244px;height:41px;background:#f5f5f5;"></div>
<div class="r" style="left:16px;top:765px;width:2244px;height:2px;background:#ececec;"></div>
<div class="t " style="left:24px;top:733.68px;font-size:24px;line-height:24px;font-weight:400;color:#333333;letter-spacing:0px;">Account - Consumer</div>
<div class="t" style="left:1118.0px;width:100px;text-align:center;top:732.75px;font-size:22.5px;line-height:22.5px;font-weight:400;color:#333333;">0</div>
<div class="t" style="left:1550.0px;width:100px;text-align:center;top:732.75px;font-size:22.5px;line-height:22.5px;font-weight:400;color:#333333;">0</div>
<div class="t" style="left:1991.0px;width:100px;text-align:center;top:732.75px;font-size:22.5px;line-height:22.5px;font-weight:400;color:#e8605f;letter-spacing:-0.3px;">47</div>
<div class="r" style="left:16px;top:767px;width:2244px;height:41px;background:#fafafa;"></div>
<div class="r" style="left:16px;top:808px;width:2244px;height:2px;background:#efefef;"></div>
<div class="t " style="left:24px;top:777.48px;font-size:24px;line-height:24px;font-weight:400;color:#333333;letter-spacing:0px;">Billing-Consumer</div>
<div class="t" style="left:1118.0px;width:100px;text-align:center;top:776.85px;font-size:22.5px;line-height:22.5px;font-weight:400;color:#333333;">0</div>
<div class="t" style="left:1550.0px;width:100px;text-align:center;top:776.85px;font-size:22.5px;line-height:22.5px;font-weight:400;color:#333333;">0</div>
<div class="t" style="left:1991.0px;width:100px;text-align:center;top:776.85px;font-size:22.5px;line-height:22.5px;font-weight:400;color:#e8605f;letter-spacing:-0.3px;">46</div>
<div class="r" style="left:16px;top:808px;width:2244px;height:44px;background:#f5f5f5;"></div>
<div class="r" style="left:16px;top:852px;width:2244px;height:2px;background:#ececec;"></div>
<div class="t " style="left:24px;top:819.68px;font-size:24px;line-height:24px;font-weight:400;color:#333333;letter-spacing:0px;">Dispatch</div>
<div class="t" style="left:1118.0px;width:100px;text-align:center;top:819.25px;font-size:22.5px;line-height:22.5px;font-weight:400;color:#333333;">0</div>
<div class="t" style="left:1550.0px;width:100px;text-align:center;top:819.25px;font-size:22.5px;line-height:22.5px;font-weight:400;color:#333333;">0</div>
<div class="t" style="left:1991.0px;width:100px;text-align:center;top:819.25px;font-size:22.5px;line-height:22.5px;font-weight:400;color:#e8605f;letter-spacing:-0.3px;">46</div>
<div class="r" style="left:16px;top:854px;width:2244px;height:39px;background:#fdfdfd;"></div>
<div class="r" style="left:16px;top:893px;width:2244px;height:2px;background:#efefef;"></div>
<div class="t " style="left:24px;top:863.48px;font-size:24px;line-height:24px;font-weight:400;color:#333333;letter-spacing:0px;">Common Browsing</div>
<div class="t" style="left:1118.0px;width:100px;text-align:center;top:863.65px;font-size:22.5px;line-height:22.5px;font-weight:400;color:#333333;">0</div>
<div class="t" style="left:1550.0px;width:100px;text-align:center;top:863.65px;font-size:22.5px;line-height:22.5px;font-weight:400;color:#333333;">0</div>
<div class="t" style="left:1991.0px;width:100px;text-align:center;top:863.65px;font-size:22.5px;line-height:22.5px;font-weight:400;color:#e8605f;letter-spacing:-0.3px;">18</div>
<div class="r" style="left:16px;top:893px;width:2244px;height:46px;background:#f5f5f5;"></div>
<div class="r" style="left:16px;top:939px;width:2244px;height:2px;background:#ececec;"></div>
<div class="t " style="left:24px;top:905.68px;font-size:24px;line-height:24px;font-weight:400;color:#333333;letter-spacing:0.55px;">Identity</div>
<div class="t" style="left:1118.0px;width:100px;text-align:center;top:905.35px;font-size:22.5px;line-height:22.5px;font-weight:400;color:#333333;">0</div>
<div class="t" style="left:1550.0px;width:100px;text-align:center;top:905.35px;font-size:22.5px;line-height:22.5px;font-weight:400;color:#333333;">0</div>
<div class="t" style="left:1991.0px;width:100px;text-align:center;top:905.35px;font-size:22.5px;line-height:22.5px;font-weight:400;color:#e8605f;letter-spacing:-0.3px;">18</div>
<div class="r" style="left:16px;top:939px;width:2244px;height:37px;background:#fdfdfd;"></div>
<div class="r" style="left:16px;top:976px;width:2244px;height:2px;background:#efefef;"></div>
<div class="t " style="left:24px;top:949.38px;font-size:24px;line-height:24px;font-weight:400;color:#333333;letter-spacing:-0.33px;">Customer Preference</div>
<div class="t" style="left:1118.0px;width:100px;text-align:center;top:949.05px;font-size:22.5px;line-height:22.5px;font-weight:400;color:#333333;">0</div>
<div class="t" style="left:1550.0px;width:100px;text-align:center;top:949.05px;font-size:22.5px;line-height:22.5px;font-weight:400;color:#333333;">0</div>
<div class="t" style="left:1991.0px;width:100px;text-align:center;top:949.05px;font-size:22.5px;line-height:22.5px;font-weight:400;color:#e8605f;letter-spacing:-0.3px;">15</div>
<div class="r" style="left:552px;top:638px;width:2px;height:338px;background:#eeeeee;"></div>
<div class="r" style="left:958px;top:638px;width:2px;height:338px;background:#eeeeee;"></div>
<div class="r" style="left:1378px;top:638px;width:2px;height:338px;background:#eeeeee;"></div>
<div class="r" style="left:1820px;top:638px;width:2px;height:338px;background:#eeeeee;"></div>
<div class="r" style="left:16px;top:976px;width:2244px;height:2px;background:#cdd5e3;"></div>
<div class="r" style="left:16px;top:978px;width:2244px;height:40px;background:#2159b2;"></div>
<div class="r" style="left:552px;top:978px;width:2px;height:40px;background:#7fa0d6;"></div>
<div class="r" style="left:958px;top:978px;width:2px;height:40px;background:#7fa0d6;"></div>
<div class="r" style="left:1378px;top:978px;width:2px;height:40px;background:#7fa0d6;"></div>
<div class="r" style="left:1820px;top:978px;width:2px;height:40px;background:#7fa0d6;"></div>
<div class="r" style="left:14px;top:976px;width:2px;height:42px;background:#dfe3ee;"></div>
<div class="t " style="left:24px;top:987.84px;font-size:25px;line-height:25px;font-weight:700;color:#ffffff;letter-spacing:0.1px;">Total</div>
<div class="t" style="left:705.0px;width:100px;text-align:center;top:987.34px;font-size:25px;line-height:25px;font-weight:700;color:#ffffff;">3</div>
<div class="t" style="left:1118.0px;width:100px;text-align:center;top:987.34px;font-size:25px;line-height:25px;font-weight:700;color:#ffffff;">0</div>
<div class="t" style="left:1550.0px;width:100px;text-align:center;top:987.34px;font-size:25px;line-height:25px;font-weight:700;color:#ffffff;">0</div>
<div class="t" style="left:1991.0px;width:100px;text-align:center;top:987.34px;font-size:25px;line-height:25px;font-weight:700;color:#ffffff;">410</div>
<div class="r" style="left:2268px;top:626px;width:16px;height:172px;background:#cdcdcd;"></div>
<svg class="r" style="left:2266px;top:592px" width="20" height="14"><path d="M4,11 L10,4 L16,11" stroke="#555" stroke-width="1.8" fill="none"/></svg>
<svg class="r" style="left:2266px;top:970px" width="20" height="14"><path d="M4,3 L10,10 L16,3" stroke="#555" stroke-width="1.8" fill="none"/></svg>
<div class="t " style="left:14px;top:1037.00px;font-size:28px;line-height:28px;font-weight:700;color:#111111;letter-spacing:0.15px;">Table Level Summary</div>
<svg class="r" style="left:324px;top:1028px" width="40" height="40"><circle cx="20" cy="20" r="15.2" stroke="#4aa0d8" stroke-width="5.5" fill="none"/><rect x="17.8" y="10" width="4.2" height="18" fill="#4aa0d8"/></svg>
<div class="r" style="left:16px;top:1077px;width:2260px;height:62px;background:#ffffff;"></div>
<div class="r" style="left:16px;top:1077px;width:2px;height:67px;background:#8ee8dc;"></div>
<div class="r" style="left:18px;top:1139px;width:2258px;height:5px;background:#7ee8da;"></div>
<div class="r" style="left:231px;top:1077px;width:2px;height:62px;background:#d4f0ec;"></div>
<div class="r" style="left:687px;top:1077px;width:2px;height:62px;background:#d4f0ec;"></div>
<div class="r" style="left:839px;top:1077px;width:2px;height:62px;background:#d4f0ec;"></div>
<div class="r" style="left:1227px;top:1077px;width:2px;height:62px;background:#d4f0ec;"></div>
<div class="r" style="left:1623px;top:1077px;width:2px;height:62px;background:#d4f0ec;"></div>
<div class="t " style="left:26px;top:1087.99px;font-size:26px;line-height:26px;font-weight:700;color:#2a5bb8;letter-spacing:0.3px;">Data Product</div>
<div class="t " style="left:240px;top:1087.99px;font-size:26px;line-height:26px;font-weight:700;color:#2a5bb8;letter-spacing:0.22px;">Database and Table Name</div>
<div class="t " style="left:696px;top:1087.99px;font-size:26px;line-height:26px;font-weight:700;color:#2a5bb8;letter-spacing:0.2px;">Event Date</div>
<div class="t " style="left:848px;top:1087.99px;font-size:26px;line-height:26px;font-weight:700;color:#2a5bb8;letter-spacing:0.3px;">Data Router</div>
<div class="t " style="left:1236px;top:1087.99px;font-size:26px;line-height:26px;font-weight:700;color:#2a5bb8;letter-spacing:-0.03px;">DL Ingestion</div>
<div class="t " style="left:1415px;top:1087.99px;font-size:26px;line-height:26px;font-weight:700;color:#2a5bb8;letter-spacing:1.0px;">NiFi</div>
<div class="t " style="left:1633px;top:1087.99px;font-size:26px;line-height:26px;font-weight:700;color:#2a5bb8;letter-spacing:0.04px;">Post Ingestion</div>
<svg class="r" style="left:1632px;top:1119px" width="22" height="12"><path d="M2,10 L18,10 L10,2 Z" fill="#2a5bb8"/></svg>
<div class="r" style="left:17px;top:1144px;width:2259px;height:40px;background:#f0f0f0;"></div>
<div class="r" style="left:17px;top:1184px;width:2259px;height:2px;background:#9c9c9c;"></div>
<div class="t " style="left:25px;top:1155.08px;font-size:22px;line-height:22px;font-weight:400;color:#333333;letter-spacing:-0.3px;">Workforce Hierarchy</div>
<div class="t " style="left:241px;top:1155.08px;font-size:22px;line-height:22px;font-weight:400;color:#333333;letter-spacing:-0.6px;">cp_gold . cp_dtv_dealers_full</div>
<div class="t " style="left:697px;top:1155.08px;font-size:22px;line-height:22px;font-weight:400;color:#333333;letter-spacing:-0.55px;">2015-05-08</div>
<div class="t " style="left:1236px;top:1155.08px;font-size:22px;line-height:22px;font-weight:400;color:#333333;letter-spacing:-1.5px;">TBD</div>
<div class="t " style="left:1416px;top:1155.08px;font-size:22px;line-height:22px;font-weight:400;color:#333333;letter-spacing:-1.5px;">TBD</div>
<div class="t " style="left:1632px;top:1155.08px;font-size:22px;line-height:22px;font-weight:400;color:#333333;letter-spacing:-0.3px;">DM : 0 Tickets, 1 Anomalies out of 1 Controls</div>
<div class="r" style="left:17px;top:1186px;width:2259px;height:39px;background:#ffffff;"></div>
<div class="r" style="left:17px;top:1225px;width:2259px;height:3px;background:#d6d6d6;"></div>
<div class="t " style="left:25px;top:1194.98px;font-size:22px;line-height:22px;font-weight:400;color:#333333;letter-spacing:-0.3px;">Workforce Hierarchy</div>
<div class="t " style="left:241px;top:1194.98px;font-size:22px;line-height:22px;font-weight:400;color:#333333;letter-spacing:-0.6px;">cp_gold . cp_dtv_dealers_full</div>
<div class="t " style="left:697px;top:1194.98px;font-size:22px;line-height:22px;font-weight:400;color:#333333;letter-spacing:-0.55px;">2017-12-14</div>
<div class="t " style="left:1236px;top:1194.98px;font-size:22px;line-height:22px;font-weight:400;color:#333333;letter-spacing:-1.5px;">TBD</div>
<div class="t " style="left:1416px;top:1194.98px;font-size:22px;line-height:22px;font-weight:400;color:#333333;letter-spacing:-1.5px;">TBD</div>
<div class="t " style="left:1632px;top:1194.98px;font-size:22px;line-height:22px;font-weight:400;color:#333333;letter-spacing:-0.3px;">DM : 0 Tickets, 1 Anomalies out of 1 Controls</div>
<div class="r" style="left:17px;top:1228px;width:2259px;height:38px;background:#f0f0f0;"></div>
<div class="r" style="left:17px;top:1266px;width:2259px;height:2px;background:#9c9c9c;"></div>
<div class="t " style="left:25px;top:1237.18px;font-size:22px;line-height:22px;font-weight:400;color:#333333;letter-spacing:-0.3px;">Workforce Hierarchy</div>
<div class="t " style="left:241px;top:1237.18px;font-size:22px;line-height:22px;font-weight:400;color:#333333;letter-spacing:-0.6px;">cp_gold . cp_dtv_dealers_full</div>
<div class="t " style="left:697px;top:1237.18px;font-size:22px;line-height:22px;font-weight:400;color:#333333;letter-spacing:-0.55px;">2018-09-19</div>
<div class="t " style="left:1236px;top:1237.18px;font-size:22px;line-height:22px;font-weight:400;color:#333333;letter-spacing:-1.5px;">TBD</div>
<div class="t " style="left:1416px;top:1237.18px;font-size:22px;line-height:22px;font-weight:400;color:#333333;letter-spacing:-1.5px;">TBD</div>
<div class="t " style="left:1632px;top:1237.18px;font-size:22px;line-height:22px;font-weight:400;color:#333333;letter-spacing:-0.3px;">DM : 0 Tickets, 1 Anomalies out of 1 Controls</div>
<div class="r" style="left:17px;top:1268px;width:2259px;height:40px;background:#ffffff;"></div>
<div class="r" style="left:17px;top:1308px;width:2259px;height:2px;background:#a6a6a6;"></div>
<div class="t " style="left:25px;top:1278.78px;font-size:22px;line-height:22px;font-weight:400;color:#333333;letter-spacing:-0.3px;">Workforce Hierarchy</div>
<div class="t " style="left:241px;top:1278.78px;font-size:22px;line-height:22px;font-weight:400;color:#333333;letter-spacing:-0.6px;">cp_gold . cp_dtv_dealers_full</div>
<div class="t " style="left:697px;top:1278.78px;font-size:22px;line-height:22px;font-weight:400;color:#333333;letter-spacing:-0.55px;">2018-10-28</div>
<div class="t " style="left:1236px;top:1278.78px;font-size:22px;line-height:22px;font-weight:400;color:#333333;letter-spacing:-1.5px;">TBD</div>
<div class="t " style="left:1416px;top:1278.78px;font-size:22px;line-height:22px;font-weight:400;color:#333333;letter-spacing:-1.5px;">TBD</div>
<div class="t " style="left:1632px;top:1278.78px;font-size:22px;line-height:22px;font-weight:400;color:#333333;letter-spacing:-0.3px;">DM : 0 Tickets, 1 Anomalies out of 1 Controls</div>
<div class="r" style="left:17px;top:1310px;width:2259px;height:38px;background:#f0f0f0;"></div>
<div class="r" style="left:17px;top:1348px;width:2259px;height:2px;background:#c4c4c4;"></div>
<div class="t " style="left:25px;top:1318.88px;font-size:22px;line-height:22px;font-weight:400;color:#333333;letter-spacing:-0.3px;">Workforce Hierarchy</div>
<div class="t " style="left:241px;top:1318.88px;font-size:22px;line-height:22px;font-weight:400;color:#333333;letter-spacing:-0.6px;">cp_gold . cp_dtv_dealers_full</div>
<div class="t " style="left:697px;top:1318.88px;font-size:22px;line-height:22px;font-weight:400;color:#333333;letter-spacing:-0.55px;">2018-11-11</div>
<div class="t " style="left:1236px;top:1318.88px;font-size:22px;line-height:22px;font-weight:400;color:#333333;letter-spacing:-1.5px;">TBD</div>
<div class="t " style="left:1416px;top:1318.88px;font-size:22px;line-height:22px;font-weight:400;color:#333333;letter-spacing:-1.5px;">TBD</div>
<div class="t " style="left:1632px;top:1318.88px;font-size:22px;line-height:22px;font-weight:400;color:#333333;letter-spacing:-0.3px;">DM : 0 Tickets, 1 Anomalies out of 1 Controls</div>
<div class="r" style="left:17px;top:1350px;width:2259px;height:40px;background:#ffffff;"></div>
<div class="r" style="left:17px;top:1390px;width:2259px;height:2px;background:#b4b4b4;"></div>
<div class="t " style="left:25px;top:1360.58px;font-size:22px;line-height:22px;font-weight:400;color:#333333;letter-spacing:-0.3px;">Workforce Hierarchy</div>
<div class="t " style="left:241px;top:1360.58px;font-size:22px;line-height:22px;font-weight:400;color:#333333;letter-spacing:-0.6px;">cp_gold . cp_dtv_dealers_full</div>
<div class="t " style="left:697px;top:1360.58px;font-size:22px;line-height:22px;font-weight:400;color:#333333;letter-spacing:-0.55px;">2018-12-19</div>
<div class="t " style="left:1236px;top:1360.58px;font-size:22px;line-height:22px;font-weight:400;color:#333333;letter-spacing:-1.5px;">TBD</div>
<div class="t " style="left:1416px;top:1360.58px;font-size:22px;line-height:22px;font-weight:400;color:#333333;letter-spacing:-1.5px;">TBD</div>
<div class="t " style="left:1632px;top:1360.58px;font-size:22px;line-height:22px;font-weight:400;color:#333333;letter-spacing:-0.3px;">DM : 0 Tickets, 1 Anomalies out of 1 Controls</div>
<div class="r" style="left:17px;top:1392px;width:2259px;height:38px;background:#f0f0f0;"></div>
<div class="r" style="left:17px;top:1430px;width:2259px;height:3px;background:#d0d0d0;"></div>
<div class="t " style="left:25px;top:1400.38px;font-size:22px;line-height:22px;font-weight:400;color:#333333;letter-spacing:-0.3px;">Workforce Hierarchy</div>
<div class="t " style="left:241px;top:1400.38px;font-size:22px;line-height:22px;font-weight:400;color:#333333;letter-spacing:-0.6px;">cp_gold . cp_dtv_dealers_full</div>
<div class="t " style="left:697px;top:1400.38px;font-size:22px;line-height:22px;font-weight:400;color:#333333;letter-spacing:-0.55px;">2019-03-07</div>
<div class="t " style="left:1236px;top:1400.38px;font-size:22px;line-height:22px;font-weight:400;color:#333333;letter-spacing:-1.5px;">TBD</div>
<div class="t " style="left:1416px;top:1400.38px;font-size:22px;line-height:22px;font-weight:400;color:#333333;letter-spacing:-1.5px;">TBD</div>
<div class="t " style="left:1632px;top:1400.38px;font-size:22px;line-height:22px;font-weight:400;color:#333333;letter-spacing:-0.3px;">DM : 0 Tickets, 1 Anomalies out of 1 Controls</div>
<div class="r" style="left:17px;top:1433px;width:2259px;height:37px;background:#ffffff;"></div>
<div class="t " style="left:25px;top:1442.68px;font-size:22px;line-height:22px;font-weight:400;color:#333333;letter-spacing:-0.3px;">Workforce Hierarchy</div>
<div class="t " style="left:241px;top:1442.68px;font-size:22px;line-height:22px;font-weight:400;color:#333333;letter-spacing:-0.6px;">cp_gold . cp_dtv_dealers_full</div>
<div class="t " style="left:697px;top:1442.68px;font-size:22px;line-height:22px;font-weight:400;color:#333333;letter-spacing:-0.55px;">2019-06-02</div>
<div class="t " style="left:1236px;top:1442.68px;font-size:22px;line-height:22px;font-weight:400;color:#333333;letter-spacing:-1.5px;">TBD</div>
<div class="t " style="left:1416px;top:1442.68px;font-size:22px;line-height:22px;font-weight:400;color:#333333;letter-spacing:-1.5px;">TBD</div>
<div class="t " style="left:1632px;top:1442.68px;font-size:22px;line-height:22px;font-weight:400;color:#333333;letter-spacing:-0.3px;">DM : 0 Tickets, 1 Anomalies out of 1 Controls</div>
<div class="r" style="left:16px;top:1144px;width:1px;height:326px;background:#b0b0b0;"></div>
<div class="r" style="left:231px;top:1144px;width:1px;height:326px;background:#e4e4e4;"></div>
<div class="r" style="left:687px;top:1144px;width:2px;height:326px;background:#c6c6c6;"></div>
<div class="r" style="left:839px;top:1144px;width:1px;height:326px;background:#d0d0d0;"></div>
<div class="r" style="left:1227px;top:1144px;width:2px;height:326px;background:#c8c8c8;"></div>
<div class="r" style="left:1623px;top:1144px;width:2px;height:326px;background:#c8c8c8;"></div>
<div class="r" style="left:2276px;top:1126px;width:16px;height:16px;background:#cdcdcd;"></div>
<svg class="r" style="left:2274px;top:1092px" width="20" height="14"><path d="M4,11 L10,4 L16,11" stroke="#555" stroke-width="1.8" fill="none"/></svg>
<svg class="r" style="left:2274px;top:1440px" width="20" height="14"><path d="M4,3 L10,10 L16,3" stroke="#555" stroke-width="1.8" fill="none"/></svg>
<div class="r" style="left:64px;top:1471px;width:2156px;height:15px;background:#cdcdcd;"></div>
<svg class="r" style="left:30px;top:1470px" width="16" height="18"><path d="M12,4 L5,9 L12,14" stroke="#444" stroke-width="1.8" fill="none"/></svg>
<svg class="r" style="left:2246px;top:1470px" width="16" height="18"><path d="M4,4 L11,9 L4,14" stroke="#444" stroke-width="1.8" fill="none"/></svg>
</body></html>
